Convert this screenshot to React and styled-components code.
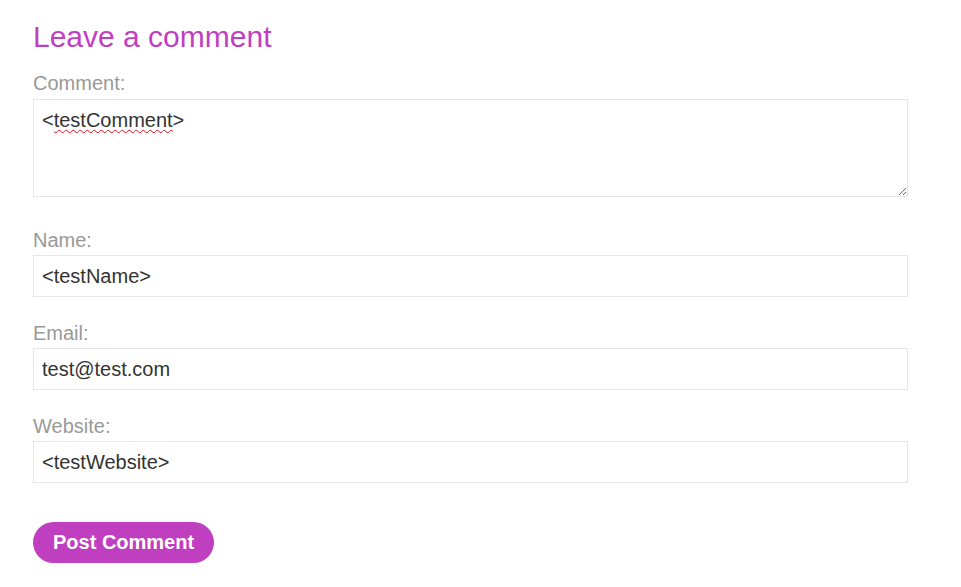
import React from "react";
import styled, { createGlobalStyle } from "styled-components";

const Global = createGlobalStyle`
  html, body { margin: 0; padding: 0; background: #ffffff; }
  body { font-family: "Liberation Sans", Arial, sans-serif; }
  * { box-sizing: border-box; }
`;

const Page = styled.div`
  padding: 20px 53px 20px 33px;
  width: 961px;
`;

const Heading = styled.h1`
  margin: 0 0 17px;
  font-size: 30px;
  line-height: 34px;
  font-weight: 400;
  color: #c03fc0;
`;

const Form = styled.form`
  display: flex;
  flex-direction: column;
`;

const Field = styled.div`
  display: flex;
  flex-direction: column;
  margin-bottom: ${(p) => p.$after}px;
`;

const Label = styled.label`
  font-size: 20px;
  line-height: 24px;
  color: #999999;
  margin-bottom: ${(p) => p.$gap || 3}px;
`;

const TextBox = styled.input`
  width: 875px;
  height: 42px;
  border: 1px solid #e6e6e6;
  padding: 0 8px;
  font-family: "Liberation Sans", Arial, sans-serif;
  font-size: 20px;
  color: #333332;
  background: #ffffff;
  outline: none;
  border-radius: 0;
`;

const AreaWrap = styled.div`
  position: relative;
  width: 875px;
  height: 98px;
`;

const Area = styled.textarea`
  display: block;
  width: 875px;
  height: 98px;
  border: 1px solid #e6e6e6;
  padding: 9px 8px 8px;
  font-family: "Liberation Sans", Arial, sans-serif;
  font-size: 20px;
  line-height: 23px;
  color: #333332;
  background: #ffffff;
  outline: none;
  border-radius: 0;
  resize: vertical;
`;

const SpellMark = styled.span`
  position: absolute;
  left: ${(p) => p.$left}px;
  top: 10px;
  font-family: "Liberation Sans", Arial, sans-serif;
  font-size: 20px;
  line-height: 23px;
  color: transparent;
  text-decoration: underline wavy #d9141e;
  text-decoration-thickness: 1px;
  text-underline-offset: 2px;
  pointer-events: none;
  white-space: pre;
`;

const Button = styled.button`
  align-self: flex-start;
  height: 41px;
  padding: 0 20px;
  border: none;
  border-radius: 21px;
  background: #c03fc0;
  color: #ffffff;
  font-family: "Liberation Sans", Arial, sans-serif;
  font-size: 20px;
  font-weight: 700;
  cursor: pointer;
`;

export default function App() {
  return (
    <>
      <Global />
      <Page>
        <Heading>Leave a comment</Heading>
        <Form onSubmit={(e) => e.preventDefault()}>
          <Field $after={31}>
            <Label $gap={4}>Comment:</Label>
            <AreaWrap>
              <Area spellCheck={false} defaultValue="<testComment>" />
              <SpellMark $left={21}>testComment</SpellMark>
            </AreaWrap>
          </Field>
          <Field $after={24}>
            <Label>Name:</Label>
            <TextBox defaultValue="<testName>" />
          </Field>
          <Field $after={24}>
            <Label>Email:</Label>
            <TextBox defaultValue="test@test.com" />
          </Field>
          <Field $after={39}>
            <Label>Website:</Label>
            <TextBox defaultValue="<testWebsite>" />
          </Field>
          <Button type="submit">Post Comment</Button>
        </Form>
      </Page>
    </>
  );
}
